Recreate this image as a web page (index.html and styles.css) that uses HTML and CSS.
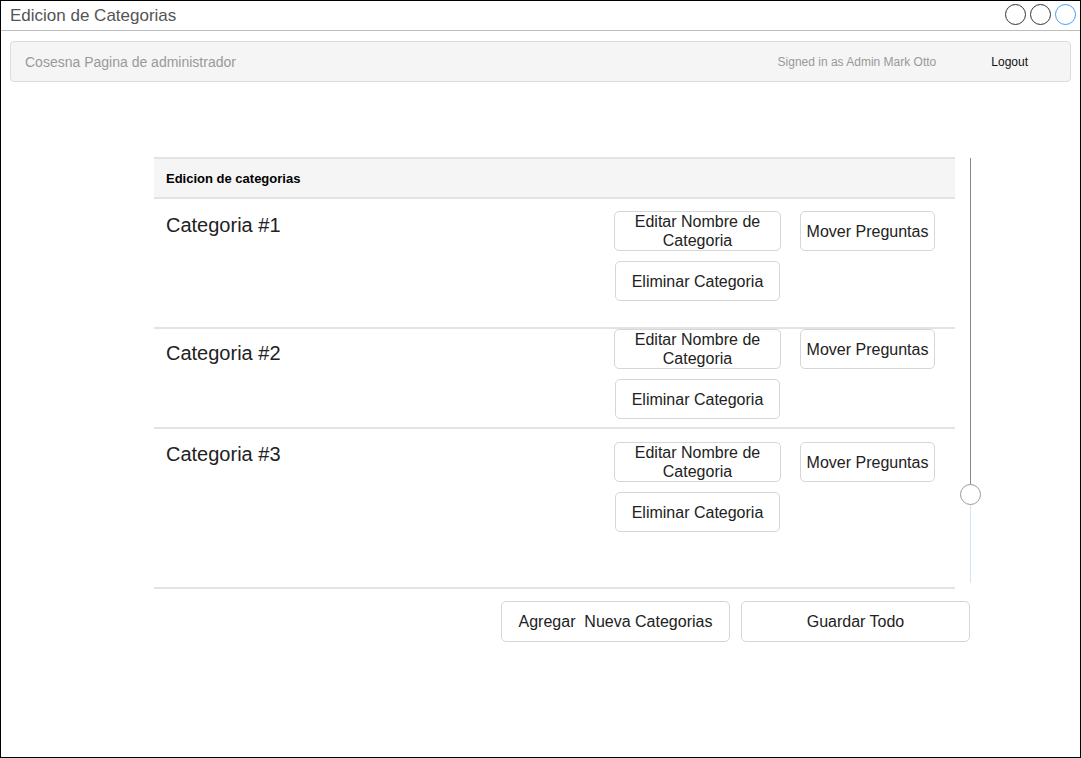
FILE: index.html
```html
<!DOCTYPE html>
<html lang="es">
<head>
<meta charset="utf-8">
<title>Edicion de Categorias</title>
<link rel="stylesheet" href="styles.css">
</head>
<body>
<div class="window">
  <div class="titlebar">
    <span class="title">Edicion de Categorias</span>
    <div class="winbtns">
      <span class="wb"></span>
      <span class="wb"></span>
      <span class="wb wb-blue"></span>
    </div>
  </div>
  <nav class="navbar">
    <span class="brand">Cosesna Pagina de administrador</span>
    <span class="signed">Signed in as Admin Mark Otto</span>
    <span class="logout">Logout</span>
  </nav>
  <main class="content">
    <div class="panel-wrap">
      <section class="panel">
        <div class="panel-head">Edicion de categorias</div>
        <div class="row row-1">
          <div class="label">Categoria #1</div>
          <div class="actions">
            <button class="btn btn-edit">Editar Nombre de Categoria</button>
            <button class="btn btn-move">Mover Preguntas</button>
            <button class="btn btn-del">Eliminar Categoria</button>
          </div>
        </div>
        <div class="row row-2">
          <div class="label">Categoria #2</div>
          <div class="actions">
            <button class="btn btn-edit">Editar Nombre de Categoria</button>
            <button class="btn btn-move">Mover Preguntas</button>
            <button class="btn btn-del">Eliminar Categoria</button>
          </div>
        </div>
        <div class="row row-3">
          <div class="label">Categoria #3</div>
          <div class="actions">
            <button class="btn btn-edit">Editar Nombre de Categoria</button>
            <button class="btn btn-move">Mover Preguntas</button>
            <button class="btn btn-del">Eliminar Categoria</button>
          </div>
        </div>
      </section>
      <div class="slider">
        <span class="track-top"></span>
        <span class="thumb"></span>
        <span class="track-bottom"></span>
      </div>
    </div>
    <div class="footer-actions">
      <button class="btn btn-wide">Agregar&nbsp; Nueva Categorias</button>
      <button class="btn btn-wide">Guardar Todo</button>
    </div>
  </main>
</div>
</body>
</html>
```

FILE: styles.css
```css
* { box-sizing: border-box; }
html, body { margin: 0; padding: 0; }
body {
  font-family: "Liberation Sans", Arial, sans-serif;
  background: #fff;
  color: #222;
}
.window {
  width: 1081px;
  height: 758px;
  border: 1px solid #000;
  overflow: hidden;
}
.titlebar {
  height: 30px;
  border-bottom: 1px solid #bdbdbd;
  display: flex;
  align-items: center;
  justify-content: space-between;
  padding: 0 4px 0 9px;
}
.title {
  font-size: 17px;
  color: #555;
  margin-top: 1px;
}
.winbtns {
  display: flex;
  gap: 4px;
  margin-top: -2px;
}
.wb {
  width: 21px;
  height: 21px;
  border: 1px solid #333;
  border-radius: 50%;
  display: block;
}
.wb-blue { border-color: #3d9bff; }
.navbar {
  margin: 10px 9px 0 9px;
  height: 41px;
  background: #f5f5f5;
  border: 1px solid #dcdcdc;
  border-radius: 4px;
  display: flex;
  align-items: center;
  padding: 0 42px 0 14px;
}
.brand {
  font-size: 14px;
  color: #999;
  flex: 1;
}
.signed {
  font-size: 12px;
  color: #999;
}
.logout {
  font-size: 12px;
  color: #111;
  margin-left: 55px;
}
.content {
  margin: 75px 0 0 153px;
  width: 826px;
}
.panel-wrap {
  display: flex;
  align-items: flex-start;
}
.panel {
  flex: none;
  width: 801px;
  border-top: 2px solid #e3e3e3;
}
.panel-head {
  height: 40px;
  background: #f5f5f5;
  border-bottom: 2px solid #e3e3e3;
  font-size: 13px;
  font-weight: bold;
  color: #000;
  padding-left: 12px;
  display: flex;
  align-items: center;
}
.row {
  display: flex;
  align-items: flex-start;
  justify-content: space-between;
  border-bottom: 2px solid #e3e3e3;
  padding-left: 12px;
  padding-right: 20px;
}
.row-1 { height: 130px; padding-top: 12px; }
.row-2 { height: 100px; padding-top: 0; }
.row-3 { height: 160px; padding-top: 13px; }
.label {
  font-size: 20px;
  line-height: 24px;
  color: #222;
}
.row-1 .label { margin-top: 2px; }
.row-2 .label { margin-top: 12px; }
.row-3 .label { margin-top: 0; }
.actions {
  display: grid;
  grid-template-columns: 167px 135px;
  column-gap: 19px;
  row-gap: 10px;
}
.btn {
  font-family: "Liberation Sans", Arial, sans-serif;
  font-size: 16px;
  line-height: 19px;
  color: #222;
  background: #fff;
  border: 1px solid #d6d6d6;
  border-radius: 5px;
  height: 40px;
  padding: 0 4px;
  display: flex;
  align-items: center;
  justify-content: center;
  text-align: center;
}
.btn-edit { grid-column: 1; grid-row: 1; }
.btn-move { grid-column: 2; grid-row: 1; }
.btn-del { grid-column: 1; grid-row: 2; margin: 0 1px; }
.slider {
  flex: none;
  width: 20px;
  margin-left: 5px;
  display: flex;
  flex-direction: column;
  align-items: center;
  padding-top: 1px;
}
.track-top {
  width: 1px;
  height: 326px;
  background: #888;
  display: block;
}
.thumb {
  width: 21px;
  height: 21px;
  border: 1px solid #999;
  border-radius: 50%;
  background: #fff;
  display: block;
}
.track-bottom {
  width: 1px;
  height: 78px;
  background: #cfe5fb;
  display: block;
}
.footer-actions {
  display: flex;
  justify-content: flex-end;
  gap: 11px;
  margin-top: 12px;
  padding-right: 10px;
}
.btn-wide {
  width: 229px;
  height: 41px;
  font-size: 16px;
}
```
